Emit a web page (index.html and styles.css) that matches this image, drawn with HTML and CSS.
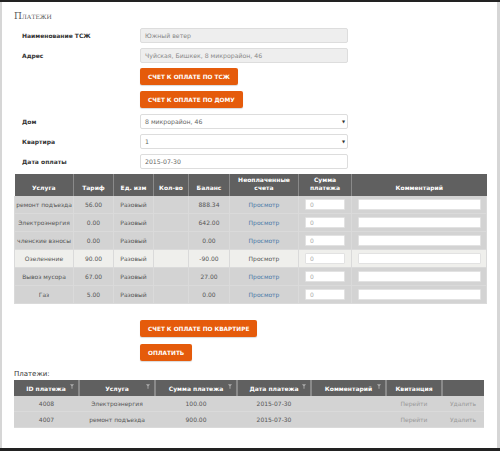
FILE: index.html
```html
<!DOCTYPE html>
<html lang="ru">
<head>
<meta charset="UTF-8">
<title>Платежи</title>
<link rel="stylesheet" href="styles.css">
</head>
<body>
<div class="page">
  <h1 class="title">Платежи</h1>

  <div class="form">
    <div class="form-row">
      <label>Наименование ТСЖ</label>
      <div class="field readonly">Южный ветер</div>
    </div>
    <div class="form-row">
      <label>Адрес</label>
      <div class="field readonly">Чуйская, Бишкек, 8 микрорайон, 46</div>
    </div>
    <div class="form-row button-row">
      <span></span>
      <div><button class="btn">Счет к оплате по ТСЖ</button></div>
    </div>
    <div class="form-row button-row">
      <span></span>
      <div><button class="btn">Счет к оплате по дому</button></div>
    </div>
    <div class="form-row">
      <label>Дом</label>
      <div class="field select">8 микрорайон, 46<span class="arrow">▼</span></div>
    </div>
    <div class="form-row">
      <label>Квартира</label>
      <div class="field select">1<span class="arrow">▼</span></div>
    </div>
    <div class="form-row">
      <label>Дата оплаты</label>
      <div class="field">2015-07-30</div>
    </div>
  </div>

  <table class="services">
    <colgroup>
      <col style="width:59px"><col style="width:40px"><col style="width:40px"><col style="width:35px">
      <col style="width:41px"><col style="width:69px"><col style="width:53px"><col>
    </colgroup>
    <thead>
      <tr>
        <th>Услуга</th><th>Тариф</th><th>Ед. изм</th><th>Кол-во</th><th>Баланс</th>
        <th>Неоплаченные<br>счета</th><th>Сумма<br>платежа</th><th>Комментарий</th>
      </tr>
    </thead>
    <tbody>
      <tr>
        <td>ремонт подъезда</td><td>56.00</td><td>Разовый</td><td></td><td>888.34</td>
        <td><a href="#">Просмотр</a></td><td><span class="cell-input sum">0</span></td><td><span class="cell-input comment"></span></td>
      </tr>
      <tr>
        <td>Электроэнергия</td><td>0.00</td><td>Разовый</td><td></td><td>642.00</td>
        <td><a href="#">Просмотр</a></td><td><span class="cell-input sum">0</span></td><td><span class="cell-input comment"></span></td>
      </tr>
      <tr>
        <td>членские взносы</td><td>0.00</td><td>Разовый</td><td></td><td>0.00</td>
        <td><a href="#">Просмотр</a></td><td><span class="cell-input sum">0</span></td><td><span class="cell-input comment"></span></td>
      </tr>
      <tr class="hover">
        <td>Озеленение</td><td>90.00</td><td>Разовый</td><td></td><td>-90.00</td>
        <td><a href="#">Просмотр</a></td><td><span class="cell-input sum">0</span></td><td><span class="cell-input comment"></span></td>
      </tr>
      <tr>
        <td>Вывоз мусора</td><td>67.00</td><td>Разовый</td><td></td><td>27.00</td>
        <td><a href="#">Просмотр</a></td><td><span class="cell-input sum">0</span></td><td><span class="cell-input comment"></span></td>
      </tr>
      <tr>
        <td>Газ</td><td>5.00</td><td>Разовый</td><td></td><td>0.00</td>
        <td><a href="#">Просмотр</a></td><td><span class="cell-input sum">0</span></td><td><span class="cell-input comment"></span></td>
      </tr>
    </tbody>
  </table>

  <div class="actions">
    <button class="btn">Счет к оплате по квартире</button>
    <button class="btn">Оплатить</button>
  </div>

  <div class="subtitle">Платежи:</div>
  <table class="payments">
    <colgroup>
      <col style="width:65px"><col style="width:76px"><col style="width:82px"><col style="width:74px">
      <col style="width:75px"><col style="width:56px"><col>
    </colgroup>
    <thead>
      <tr>
        <th>ID платежа<svg class="filter" viewBox="0 0 6 7"><path d="M0 0h6L3.7 3v4H2.3V3z"/></svg></th>
        <th>Услуга<svg class="filter" viewBox="0 0 6 7"><path d="M0 0h6L3.7 3v4H2.3V3z"/></svg></th>
        <th>Сумма платежа<svg class="filter" viewBox="0 0 6 7"><path d="M0 0h6L3.7 3v4H2.3V3z"/></svg></th>
        <th>Дата платежа<svg class="filter" viewBox="0 0 6 7"><path d="M0 0h6L3.7 3v4H2.3V3z"/></svg></th>
        <th>Комментарий<svg class="filter" viewBox="0 0 6 7"><path d="M0 0h6L3.7 3v4H2.3V3z"/></svg></th>
        <th>Квитанция</th>
        <th></th>
      </tr>
    </thead>
    <tbody>
      <tr>
        <td>4008</td><td>Электроэнергия</td><td>100.00</td><td>2015-07-30</td><td></td>
        <td class="muted">Перейти</td><td class="muted">Удалить</td>
      </tr>
      <tr>
        <td>4007</td><td>ремонт подъезда</td><td>900.00</td><td>2015-07-30</td><td></td>
        <td class="muted">Перейти</td><td class="muted">Удалить</td>
      </tr>
    </tbody>
  </table>
</div>
</body>
</html>
```

FILE: styles.css
```css
body {
  margin: 0;
  background-color: #222;
  font-family: "DejaVu Sans", Verdana, sans-serif;
}

.page {
  margin-top: 2px;
  height: 446px;
  box-sizing: border-box;
  padding: 0 11px 0 12px;
  background-color: #fff;
  border-left: 2px solid #d6d6d6;
  border-right: 3px solid #d6d6d6;
}

.title {
  margin: 0 0 5px;
  padding-top: 7px;
  height: 14px;
  font-family: "DejaVu Serif", Georgia, serif;
  font-variant: small-caps;
  font-weight: normal;
  font-size: 9px;
  line-height: 14px;
  color: #555;
}

.form-row {
  display: grid;
  grid-template-columns: 118px 208px;
  align-items: center;
  padding-left: 8px;
  margin-bottom: 5px;
}

.form-row.button-row {
  margin-bottom: 6px;
}

.form-row label {
  font-size: 6px;
  font-weight: bold;
  color: #333;
}

.field {
  position: relative;
  box-sizing: border-box;
  height: 15px;
  padding-left: 4px;
  border: 1px solid #ddd;
  border-radius: 2px;
  font-size: 6.2px;
  line-height: 13px;
  color: #666;
  background-color: #fff;
}

.field.readonly {
  background-color: #eee;
  color: #888;
}

.arrow {
  position: absolute;
  right: 2px;
  top: 0;
  font-size: 4px;
  color: #333;
}

.btn {
  display: block;
  height: 17px;
  padding: 0 8px;
  border: none;
  border-radius: 2px;
  background-color: #e55b0b;
  box-shadow: 0 1px 1px rgba(0, 0, 0, 0.15);
  color: #fff;
  font-family: "DejaVu Sans", Verdana, sans-serif;
  font-size: 5.8px;
  font-weight: bold;
  text-transform: uppercase;
  cursor: pointer;
}

table {
  border-collapse: collapse;
  table-layout: fixed;
  font-size: 6px;
  color: #555;
  text-align: center;
}

.services {
  width: 473px;
  margin-top: 1px;
}

.services th {
  height: 18px;
  padding: 0 2px 4px;
  vertical-align: bottom;
  background-color: #606060;
  border-left: 1px solid #8a8a8a;
  color: #fff;
  font-weight: bold;
  line-height: 8px;
}

.services th:first-child,
.payments th:first-child {
  border-left: none;
}

.services td {
  height: 17px;
  padding: 0;
  background-color: #d3d3d3;
  border: 1px solid #dadada;
  border-top: none;
  line-height: 10px;
}

.services tr.hover td {
  background-color: #efefec;
}

.services a {
  color: #4a78a8;
  text-decoration: none;
}

.services tr.hover a {
  color: #555;
}

.cell-input {
  display: inline-block;
  box-sizing: border-box;
  height: 11px;
  vertical-align: middle;
  padding-left: 4px;
  background-color: #fff;
  border: 1px solid #e2e2e2;
  border-radius: 1px;
  color: #aaa;
  line-height: 9px;
  text-align: left;
}

.cell-input.sum {
  width: 40px;
}

.cell-input.comment {
  width: 123px;
}

.actions {
  display: flex;
  flex-direction: column;
  align-items: flex-start;
  gap: 7px;
  margin: 16px 0 0 126px;
}

.subtitle {
  margin-top: 7px;
  height: 12px;
  font-size: 7px;
  line-height: 12px;
  color: #333;
}

.payments {
  width: 470px;
}

.payments th {
  position: relative;
  height: 16px;
  padding: 0 2px;
  background-color: #606060;
  border-left: 2px solid #8a8a8a;
  color: #fff;
  font-weight: bold;
}

.filter {
  position: absolute;
  right: 4px;
  top: 4px;
  width: 4px;
  height: 5px;
  fill: #aaa;
}

.payments td {
  height: 15px;
  padding: 0;
  background-color: #d3d3d3;
  border-bottom: 1px solid #dadada;
}

.payments td.muted {
  color: #999;
}
```
